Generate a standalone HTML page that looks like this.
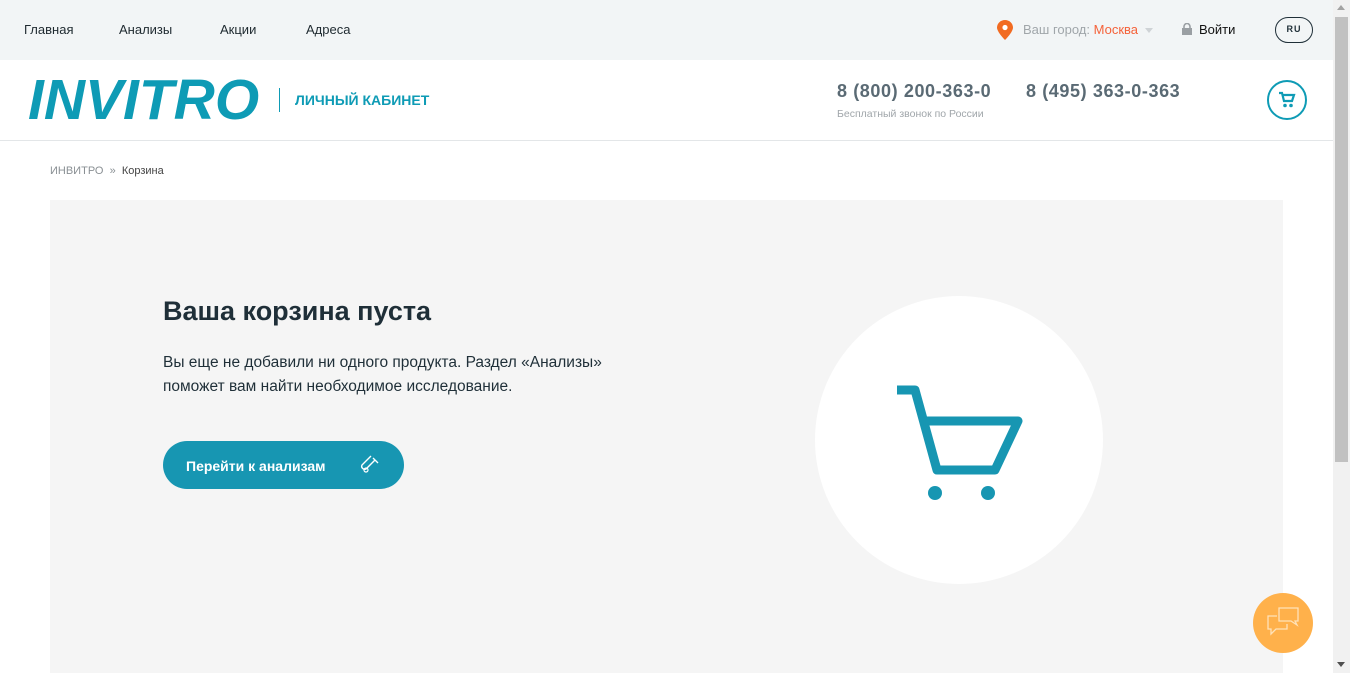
<!DOCTYPE html>
<html><head><meta charset="utf-8"><style>
*{margin:0;padding:0;box-sizing:border-box}
body{width:1350px;height:673px;overflow:hidden;font-family:"Liberation Sans",sans-serif;background:#fff;position:relative}
.top{position:absolute;left:0;top:0;width:1333px;height:60px;background:#f2f5f6}
.top a{position:absolute;top:22px;font-size:13px;color:#1f2a30;text-decoration:none}
.hdr{position:absolute;left:0;top:60px;width:1333px;height:81px;border-bottom:1px solid #e3e6e8}
.sb{position:absolute;right:0;top:0;width:17px;height:673px;background:#f1f1f1}
.sb div{position:absolute;left:2px;top:17px;width:13px;height:445px;background:#c1c1c1}
</style></head><body>
<div class="top">
<a style="left:24px">Главная</a><a style="left:119px">Анализы</a><a style="left:220px">Акции</a><a style="left:306px">Адреса</a>
<svg style="position:absolute;left:997px;top:20px" width="16" height="20" viewBox="0 0 16 20"><path d="M8 0C3.6 0 0 3.4 0 7.6 0 12 8 20 8 20s8-8 8-12.4C16 3.4 12.4 0 8 0z" fill="#f26b21"/><circle cx="8" cy="7.5" r="2.6" fill="#fff"/></svg>
<span style="position:absolute;left:1023px;top:22px;font-size:13px;color:#a0a6aa">Ваш город: <span style="color:#f5623a">Москва</span></span>
<div style="position:absolute;left:1145px;top:28px;border:4px solid transparent;border-top:5px solid #cfd3d6"></div>
<svg style="position:absolute;left:1182px;top:23px" width="10" height="12" viewBox="0 0 10 12"><rect x="0" y="5" width="10" height="7" fill="#9a9fa3"/><path d="M2 5V3.5a3 3 0 0 1 6 0V5" stroke="#9a9fa3" stroke-width="1.6" fill="none"/></svg>
<span style="position:absolute;left:1199px;top:22px;font-size:13px;color:#111">Войти</span>
<div style="position:absolute;left:1275px;top:17px;width:38px;height:26px;border:1.5px solid #1f2f38;border-radius:13px;font-size:9px;font-weight:bold;text-align:center;line-height:23px;letter-spacing:1px;color:#1f2f38">RU</div>
</div>
<div class="hdr">
<div style="position:absolute;left:28px;top:10px;font-size:57px;font-weight:bold;font-style:italic;color:#0e9bb5;letter-spacing:0px;line-height:60px">INVITRO</div>
<div style="position:absolute;left:279px;top:28px;width:1px;height:24px;background:#0e9bb5"></div>
<div style="position:absolute;left:295px;top:32px;font-size:14px;font-weight:bold;color:#0e9bb5">ЛИЧНЫЙ КАБИНЕТ</div>
<div style="position:absolute;left:837px;top:21px;font-size:18px;font-weight:bold;color:#5a6a74;letter-spacing:0.6px">8 (800) 200-363-0</div>
<div style="position:absolute;left:837px;top:48px;font-size:10.5px;color:#a0a6aa">Бесплатный звонок по России</div>
<div style="position:absolute;left:1026px;top:21px;font-size:18px;font-weight:bold;color:#5a6a74;letter-spacing:0.6px">8 (495) 363-0-363</div>
<div style="position:absolute;left:1267px;top:20px;width:40px;height:40px;border:2px solid #0e9bb5;border-radius:50%"></div>
<svg style="position:absolute;left:1278px;top:31px" width="18" height="18" viewBox="0 0 18 18"><path d="M1 2h3l2 8h8l2-6H5" stroke="#0e9bb5" stroke-width="2.2" fill="none"/><circle cx="7" cy="14.5" r="1.8" fill="#0e9bb5"/><circle cx="13" cy="14.5" r="1.8" fill="#0e9bb5"/></svg>
</div>
<div style="position:absolute;left:50px;top:165px;font-size:11px;color:#8a9094">ИНВИТРО &nbsp;» &nbsp;<span style="color:#444">Корзина</span></div>
<div style="position:absolute;left:50px;top:200px;width:1233px;height:473px;background:#f5f5f5">
<div style="position:absolute;left:113px;top:96px;font-size:27px;font-weight:bold;color:#1f2f38">Ваша корзина пуста</div>
<div style="position:absolute;left:113px;top:151px;font-size:15.5px;line-height:24px;color:#1f2f38">Вы еще не добавили ни одного продукта. Раздел «Анализы»<br>поможет вам найти необходимое исследование.</div>
<div style="position:absolute;left:113px;top:241px;width:241px;height:48px;border-radius:24px;background:#1796b2;color:#fff;font-size:14px;font-weight:bold;line-height:50px;padding-left:23px">Перейти к анализам
<svg style="position:absolute;left:196px;top:14px" width="22" height="22" viewBox="0 0 22 22"><path d="M14 3l5 5M16 5L7 14a3 3 0 0 1-4-4l9-9" stroke="#fff" stroke-width="1.4" fill="none"/><circle cx="7" cy="15" r="2" stroke="#fff" stroke-width="1.2" fill="none"/></svg></div>
<div style="position:absolute;left:765px;top:96px;width:288px;height:288px;border-radius:50%;background:#fff"></div>
<svg style="position:absolute;left:845px;top:185px" width="130" height="120" viewBox="0 0 130 120"><path d="M2 5h18l22 80h58l23-49H30" stroke="#1796b2" stroke-width="9" fill="none" stroke-linejoin="round"/><circle cx="40" cy="108" r="7" fill="#1796b2"/><circle cx="93" cy="108" r="7" fill="#1796b2"/></svg>
</div>
<div style="position:absolute;left:1253px;top:593px;width:60px;height:60px;border-radius:50%;background:#ffb14b"></div>
<svg style="position:absolute;left:1265px;top:605px" width="36" height="36" viewBox="0 0 36 36"><path d="M14 3h19v13h-3l2 4-6-4H14z" stroke="#ffe2b8" stroke-width="1.3" fill="none"/><path d="M12 11H3v13h3v5l5-5h11v-5" stroke="#ffe2b8" stroke-width="1.3" fill="none"/></svg>
<div class="sb"><div></div>
<div style="position:absolute;left:4px;top:5px;width:0;height:0;border:4px solid transparent;border-bottom:5px solid #a3a3a3;border-top:0;background:none"></div>
<div style="position:absolute;left:4px;top:662px;width:0;height:0;border:4px solid transparent;border-top:5px solid #505050;border-bottom:0;background:none"></div>
</div>
</body></html>
